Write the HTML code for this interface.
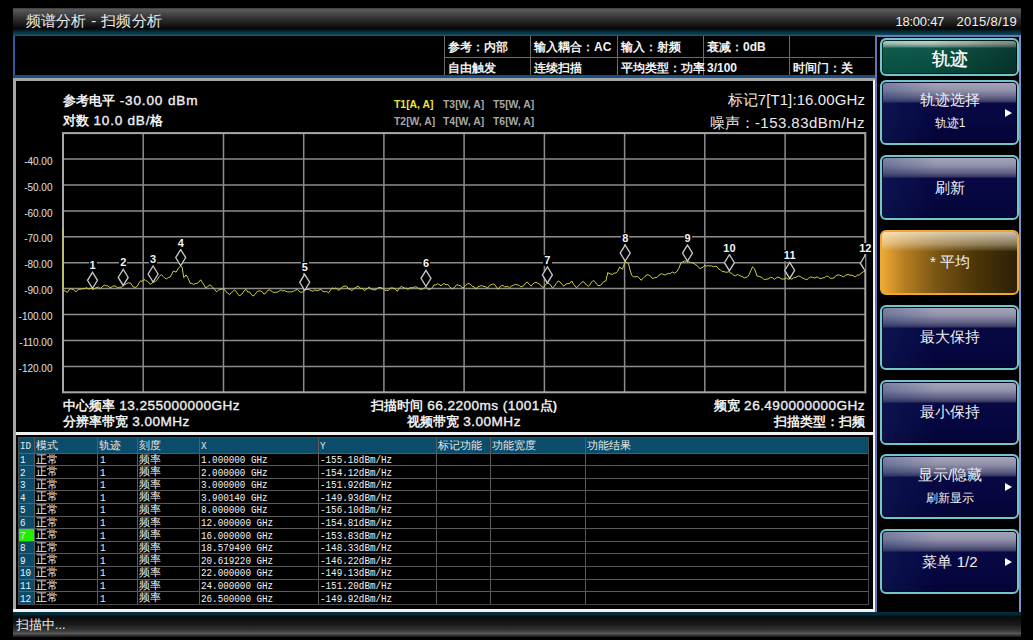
<!DOCTYPE html>
<html><head><meta charset="utf-8">
<style>
*{margin:0;padding:0;box-sizing:border-box}
html,body{width:1033px;height:640px;background:#000;overflow:hidden;font-family:"Liberation Sans",sans-serif;color:#fff}
.a{position:absolute;white-space:nowrap;line-height:1}
#title{left:13px;top:8px;width:1008px;height:21px;background:linear-gradient(#3a3a3a,#5a5a5a 8%,#2c2c2c 55%,#0a0a0a 95%,#050505)}
#teal{left:13px;top:29px;width:1008px;height:7px;background:linear-gradient(#020a0e,#03303c 40%,#0a3e4e 70%,#1f5070 88%,#2a3a70)}
.tt{font-size:15px;color:#e8e8e8;top:13px}
.tm{font-size:13px;color:#f0f0f0;top:15px}
#hdr{left:13px;top:36px;width:863px;height:42px;border-left:2px solid #3a55a0}
#hdrbot{left:13px;top:75px;width:862px;height:3px;background:#1a4f80}
.hl{background:#6a6a6a}
.hc{font-size:12px;font-weight:bold;color:#f2f2f2}
#gp{left:13px;top:78px;width:863px;height:534px;border-left:3px solid #a6a6a6;border-top:3px solid #a6a6a6;border-right:3px solid #f4f4f4}
#sep{left:16px;top:432px;width:857px;height:3px;background:#f0f0f0}
#gpbot{left:13px;top:609px;width:863px;height:3px;background:#f0f0f0}
.yl{font-size:10px;color:#e0e0e0;right:980.5px}
.gt{font-size:13px;font-weight:bold;color:#f0f0f0}
.l{letter-spacing:0.45px;font-weight:normal;font-size:13.6px;-webkit-text-stroke:0.35px #f0f0f0}
.ml{font-size:11px;font-weight:bold;color:#f4f4f4;background:#000;padding:0 1px;transform:translateX(-50%)}
.tr{font-size:10.4px;font-weight:bold;color:#a8a8a8}
#rp{left:875px;top:35px;width:146px;height:577px;border-left:2px solid #6575b5;border-top:2px solid #6a78b8;border-right:2px solid #8090c8}
.btn{position:absolute;left:880px;width:138.5px;height:65px;border:2px solid #72c6cc;border-radius:6px;overflow:hidden;box-shadow:inset 0 0 0 1px #020220;
 background:linear-gradient(#a8a8bc 0%,#9090aa 14%,#606084 26%,#3a3a64 32%,#080844 35%,#060640 70%,#040436 100%)}
.btn::before{content:"";position:absolute;inset:0;background:linear-gradient(90deg,rgba(20,50,110,.3),rgba(0,0,0,0) 40%)}
.btn.ttl{box-shadow:inset 0 0 0 1px #022018;background:linear-gradient(#c4d8d0 0%,#b0c8c0 10%,#6a9088 19%,#10584a 24%,#0a5244 60%,#084a3e 100%)}
.btn.ttl::before{background:linear-gradient(90deg,rgba(20,110,90,.12),rgba(0,0,0,0) 35%,rgba(0,0,0,.35))}
.btn.org{border-color:#f0a830;box-shadow:none;background:linear-gradient(90deg,#eeaa34 0%,#b87e22 16%,#7a5614 40%,#4a3408 70%,#2e2006 100%)}
.btn.org::before{background:linear-gradient(rgba(255,245,225,.75) 0%,rgba(240,225,195,.45) 20%,rgba(200,170,110,.15) 30%,rgba(0,0,0,0) 32%)}
.bt{position:absolute;left:1.5px;right:0;text-align:center;color:#eeeeee;line-height:1;z-index:2}
.arr{position:absolute;right:5px;width:0;height:0;border-left:7px solid #fff;border-top:4px solid transparent;border-bottom:4px solid transparent;z-index:2}
#status{left:13px;top:612px;width:1008px;height:25px;background:linear-gradient(#04303c 0%,#03283a 10%,#021018 17%,#0a0a0a 22%,#1a1a1a 50%,#3a3a3a 76%,#5a5a5a 86%,#3a3a3a 92%,#151515 100%)}
.tl{background:#5a5a5a}
.th{font-size:11px;color:#e8e8e8}
.td{font-size:11px;color:#f2f2f2}
.mono{font-family:"Liberation Mono",monospace;font-size:9.25px;transform:scaleY(1.25);transform-origin:0 0}
</style></head><body>
<!-- title bar -->
<div class="a" id="title"></div>
<div class="a" id="teal"></div>
<div class="a tt" style="left:25.5px;letter-spacing:0.3px">频谱分析 - 扫频分析</div>
<div class="a tm" style="left:895.5px;letter-spacing:-0.25px">18:00:47</div>
<div class="a tm" style="left:956.5px;letter-spacing:0.3px">2015/8/19</div>

<!-- header info -->
<div class="a" id="hdr"></div>
<div class="a" style="left:13px;top:35px;width:863px;height:1px;background:#2a4a80"></div>
<div class="a" id="hdrbot"></div>
<div class="a hl" style="left:444px;top:36px;width:1px;height:39px"></div>
<div class="a hl" style="left:530px;top:36px;width:1px;height:39px"></div>
<div class="a hl" style="left:617px;top:36px;width:1px;height:39px"></div>
<div class="a hl" style="left:703px;top:36px;width:1px;height:39px"></div>
<div class="a hl" style="left:789px;top:36px;width:1px;height:39px"></div>
<div class="a hl" style="left:444px;top:57px;width:430px;height:1px"></div>
<div class="a hc" style="left:448px;top:41px">参考：内部</div>
<div class="a hc" style="left:534px;top:41px">输入耦合：AC</div>
<div class="a hc" style="left:621px;top:41px">输入：射频</div>
<div class="a hc" style="left:707px;top:41px">衰减：0dB</div>
<div class="a hc" style="left:448px;top:62px">自由触发</div>
<div class="a hc" style="left:534px;top:62px">连续扫描</div>
<div class="a hc" style="left:621px;top:62px">平均类型：功率</div>
<div class="a hc" style="left:707px;top:62px">3/100</div>
<div class="a hc" style="left:793px;top:62px">时间门：关</div>

<!-- graph panel -->
<div class="a" id="gp"></div>
<div class="a" id="sep"></div>
<div class="a" id="gpbot"></div>

<div class="a gt" style="left:63px;top:94px">参考电平<span class="l" style="letter-spacing:0.85px"> -30.00 dBm</span></div>
<div class="a gt" style="left:63px;top:114px">对数<span class="l" style="letter-spacing:0.75px"> 10.0 dB/</span>格</div>

<div class="a tr" style="left:394px;top:100px;color:#e8e838">T1[A, A]</div>
<div class="a tr" style="left:443px;top:100px">T3[W, A]</div>
<div class="a tr" style="left:493px;top:100px">T5[W, A]</div>
<div class="a tr" style="left:394px;top:117px">T2[W, A]</div>
<div class="a tr" style="left:443px;top:117px">T4[W, A]</div>
<div class="a tr" style="left:493px;top:117px">T6[W, A]</div>

<div class="a" style="right:168px;top:92px;font-size:15px;color:#eaeaea">标记<span style="letter-spacing:0.1px">7[T1]:16.00GHz</span></div>
<div class="a" style="right:168px;top:115px;font-size:15px;color:#eaeaea">噪声：<span style="letter-spacing:0.45px">-153.83dBm/Hz</span></div>

<div class="a yl" style="top:156.6px">-40.00</div>
<div class="a yl" style="top:182.5px">-50.00</div>
<div class="a yl" style="top:208.5px">-60.00</div>
<div class="a yl" style="top:234.4px">-70.00</div>
<div class="a yl" style="top:260.3px">-80.00</div>
<div class="a yl" style="top:286.2px">-90.00</div>
<div class="a yl" style="top:312.1px">-100.00</div>
<div class="a yl" style="top:338.1px">-110.00</div>
<div class="a yl" style="top:364.0px">-120.00</div>
<svg class="a" style="left:0;top:0" width="1033" height="640" shape-rendering="auto">
<g stroke="#8c8c8c" stroke-width="1.5" fill="none">
<line x1="143.2" y1="133.1" x2="143.2" y2="392.3"/>
<line x1="223.5" y1="133.1" x2="223.5" y2="392.3"/>
<line x1="303.7" y1="133.1" x2="303.7" y2="392.3"/>
<line x1="383.9" y1="133.1" x2="383.9" y2="392.3"/>
<line x1="464.1" y1="133.1" x2="464.1" y2="392.3"/>
<line x1="544.4" y1="133.1" x2="544.4" y2="392.3"/>
<line x1="624.6" y1="133.1" x2="624.6" y2="392.3"/>
<line x1="704.8" y1="133.1" x2="704.8" y2="392.3"/>
<line x1="785.1" y1="133.1" x2="785.1" y2="392.3"/>
<line x1="63.0" y1="159.0" x2="865.3" y2="159.0"/>
<line x1="63.0" y1="184.9" x2="865.3" y2="184.9"/>
<line x1="63.0" y1="210.9" x2="865.3" y2="210.9"/>
<line x1="63.0" y1="236.8" x2="865.3" y2="236.8"/>
<line x1="63.0" y1="262.7" x2="865.3" y2="262.7"/>
<line x1="63.0" y1="288.6" x2="865.3" y2="288.6"/>
<line x1="63.0" y1="314.5" x2="865.3" y2="314.5"/>
<line x1="63.0" y1="340.5" x2="865.3" y2="340.5"/>
<line x1="63.0" y1="366.4" x2="865.3" y2="366.4"/>
</g>
<rect x="63.0" y="133.1" width="802.3" height="259.2" stroke="#a8a8a8" stroke-width="2" fill="none"/>
<polyline points="63,228 63,290.3 65.2,291.0 67.4,292.4 69.1,289.8 70.7,288.7 73.2,289.5 74.8,290.9 76.5,291.6 78.2,289.4 79.8,289.1 81.4,289.0 83.1,288.5 84.7,288.7 86.3,287.7 88.0,288.7 89.6,289.0 91.3,288.2 92.9,289.5 95.0,288.3 97.0,287.4 98.7,287.1 100.3,288.7 102.8,286.2 104.4,285.2 106.1,285.8 107.7,285.8 109.3,287.3 111.0,287.4 112.7,286.2 114.3,286.0 116.0,286.2 117.6,287.9 119.5,287.3 121.5,287.2 123.4,285.4 125.0,284.7 126.7,283.5 128.3,282.9 130.8,283.3 133.3,287.0 135.7,287.4 137.3,286.2 139.0,282.9 140.6,280.8 142.2,281.4 143.8,279.5 145.5,280.3 147.1,281.2 148.8,282.4 150.4,284.5 152.1,282.8 153.7,282.0 155.3,281.6 157.0,279.8 159.2,276.5 161.3,274.6 163.0,276.2 164.6,277.8 166.3,279.0 168.2,277.7 170.1,277.0 171.8,274.1 173.4,271.0 176.1,272.1 178.8,267.7 180.5,266.1 182.1,267.2 183.8,277.6 186.0,274.9 188.2,278.3 190.3,283.6 191.9,283.2 193.6,284.7 195.2,283.5 196.9,283.6 198.8,282.1 200.7,279.8 202.3,282.4 204.0,284.9 205.6,288.0 207.8,286.5 210.0,284.7 212.8,287.4 214.7,289.5 216.6,291.8 218.8,290.0 221.0,289.1 223.9,288.9 225.8,291.5 227.8,293.2 229.7,294.7 231.3,292.5 232.9,291.6 234.5,289.8 236.3,291.8 238.0,294.6 239.8,295.7 241.9,294.1 244.0,291.0 246.1,289.4 247.8,292.1 249.5,291.9 251.2,294.2 252.9,296.1 255.1,294.3 257.3,291.3 260.2,290.8 262.1,291.7 264.0,294.2 266.0,292.7 267.9,290.3 269.9,289.8 272.3,291.8 274.2,292.4 276.1,292.3 277.7,292.0 279.4,290.8 281.0,289.8 282.6,291.1 284.2,290.4 285.8,291.3 287.7,291.9 289.7,291.8 291.6,291.8 293.5,291.2 295.5,290.1 297.4,289.4 299.0,291.1 300.7,292.3 302.3,292.3 304.7,289.8 306.9,289.5 309.1,289.4 311.0,290.7 312.9,291.3 314.9,289.9 316.9,290.8 318.8,290.2 320.8,289.4 322.8,291.3 324.7,291.8 326.7,291.5 328.6,292.8 330.5,290.1 332.4,287.9 334.1,288.9 335.8,288.0 337.5,289.6 339.2,290.3 341.1,288.1 343.1,286.6 345.0,286.0 346.7,286.2 348.4,289.0 350.1,288.8 351.8,290.8 353.9,288.6 356.0,287.4 358.1,286.0 360.2,288.4 362.3,288.3 364.4,290.8 366.0,289.4 367.6,288.4 369.2,287.0 370.8,288.8 372.4,289.6 374.0,289.8 376.0,289.8 377.9,287.7 379.9,287.4 381.6,287.9 383.2,288.5 384.9,290.4 386.6,290.3 388.5,290.5 390.5,287.9 392.4,287.9 394.0,288.3 395.7,289.6 397.3,291.3 399.2,288.3 401.2,286.5 402.9,287.2 404.6,288.1 406.3,288.2 408.0,289.4 409.9,287.7 411.9,287.9 413.9,287.2 415.8,286.8 417.5,287.5 419.2,289.0 420.9,289.0 422.6,289.2 424.3,287.8 426.0,286.3 428.4,289.7 430.4,289.0 432.3,287.8 434.2,284.8 435.8,285.1 437.4,283.6 439.0,284.4 441.0,285.8 443.9,283.4 445.9,284.8 447.8,284.4 449.4,286.4 451.0,288.1 452.6,288.7 454.6,287.4 456.5,284.8 458.4,285.1 460.3,285.8 463.2,288.2 465.1,285.8 467.1,283.9 469.1,283.5 471.0,284.8 472.6,286.6 474.2,286.8 475.8,289.2 477.4,287.1 479.1,286.3 480.7,285.8 482.4,285.7 484.0,286.6 485.7,286.6 487.4,288.2 489.4,285.7 491.3,284.6 493.3,283.9 494.9,284.8 496.5,287.1 498.1,289.2 500.5,286.2 502.9,285.3 504.5,286.7 506.1,286.8 507.8,286.4 509.4,287.8 511.5,286.1 513.5,285.2 515.6,284.4 517.2,284.9 518.9,285.2 520.5,286.8 522.2,286.4 523.9,285.5 525.6,283.1 527.3,282.0 529.2,284.1 531.1,286.3 532.7,284.1 534.4,282.8 536.0,282.4 537.9,283.3 539.9,284.3 541.8,286.8 543.7,287.3 545.7,284.4 547.6,282.9 550.0,284.3 552.4,287.8 554.3,286.5 556.3,283.3 558.2,281.0 560.1,282.0 562.1,284.6 564.0,286.3 566.0,283.9 567.9,283.7 569.8,283.4 571.8,281.0 573.4,284.1 575.0,286.0 576.6,287.8 578.3,285.7 580.0,284.4 581.7,282.3 583.4,281.5 585.0,283.7 586.7,284.8 588.3,286.3 589.9,285.0 591.5,282.1 593.1,280.5 595.0,281.7 597.0,284.7 598.9,285.8 601.1,284.9 603.3,281.9 606.0,280.8 607.7,272.6 610.9,274.2 612.5,274.4 614.2,273.1 615.9,273.0 617.5,271.5 619.7,267.1 622.4,269.3 625.2,261.7 628.4,263.3 630.0,270.0 631.7,275.3 633.4,276.7 635.0,277.0 637.2,276.4 639.1,277.7 641.0,280.3 643.0,278.5 645.0,276.3 647.0,274.8 648.8,275.0 650.7,276.3 652.5,278.6 654.7,277.6 656.9,277.5 659.1,275.1 661.3,273.7 663.1,274.3 664.9,275.0 666.7,274.2 668.5,273.4 670.4,273.7 672.2,272.0 674.4,273.1 676.6,272.0 678.8,268.4 681.0,262.7 682.8,261.9 684.6,261.0 686.4,261.1 688.6,261.3 690.8,262.7 693.0,262.9 695.2,264.4 697.5,265.9 699.8,268.7 701.4,267.8 703.1,267.3 704.7,265.3 706.4,266.2 708.1,265.5 709.8,266.0 711.5,265.8 713.4,266.7 715.3,266.3 716.9,266.5 718.6,268.9 720.2,269.7 722.1,271.6 724.0,271.6 725.6,272.2 727.3,272.2 728.9,271.6 730.5,272.9 732.1,273.5 733.7,275.5 735.7,275.6 737.6,274.5 740.5,276.0 742.5,276.6 744.4,277.9 746.0,277.4 747.6,276.7 749.2,274.5 750.9,270.4 752.6,266.8 754.5,268.7 757.0,276.0 759.4,276.5 761.8,277.4 763.8,279.4 765.7,279.4 768.1,278.9 770.5,277.4 772.5,277.7 774.4,279.4 776.0,277.9 777.6,277.3 779.2,277.4 781.1,278.8 783.1,279.1 785.0,278.9 786.6,278.0 788.3,279.3 789.9,278.4 791.8,279.2 793.7,277.8 796.0,277.2 798.4,275.9 800.3,276.5 802.2,277.8 804.5,278.9 806.9,279.7 808.8,278.1 810.6,277.0 812.5,277.3 814.9,278.1 817.2,276.9 819.0,278.1 820.9,278.7 822.8,277.8 824.6,277.8 826.5,275.9 828.4,276.6 830.3,278.3 832.2,278.3 834.1,277.9 835.9,275.5 837.8,275.0 839.7,275.1 841.5,275.8 843.4,276.9 845.8,275.1 848.1,274.5 850.0,275.3 851.9,275.2 853.7,276.1 855.6,276.9 857.5,274.8 859.3,275.3 861.2,273.1 863.2,271.8 865.3,271.2" stroke="#d0d040" stroke-width="1" fill="none" stroke-linejoin="round"/>
<clipPath id="gc"><rect x="0" y="0" width="865.3" height="640"/></clipPath><g clip-path="url(#gc)">
<path d="M92.5,272.3 L97.5,280.3 L92.5,288.3 L87.5,280.3 Z" stroke="#c8c8c8" stroke-width="1.3" fill="#000"/>
<path d="M123.2,269.4 L128.2,277.4 L123.2,285.4 L118.2,277.4 Z" stroke="#c8c8c8" stroke-width="1.3" fill="#000"/>
<path d="M153.1,266 L158.1,274 L153.1,282 L148.1,274 Z" stroke="#c8c8c8" stroke-width="1.3" fill="#000"/>
<path d="M180.7,249.60000000000002 L185.7,257.6 L180.7,265.6 L175.7,257.6 Z" stroke="#c8c8c8" stroke-width="1.3" fill="#000"/>
<path d="M304.7,274.3 L309.7,282.3 L304.7,290.3 L299.7,282.3 Z" stroke="#c8c8c8" stroke-width="1.3" fill="#000"/>
<path d="M426,270.3 L431,278.3 L426,286.3 L421,278.3 Z" stroke="#c8c8c8" stroke-width="1.3" fill="#000"/>
<path d="M547.4,266.9 L552.4,274.9 L547.4,282.9 L542.4,274.9 Z" stroke="#c8c8c8" stroke-width="1.3" fill="#000"/>
<path d="M625.2,245.10000000000002 L630.2,253.10000000000002 L625.2,261.1 L620.2,253.10000000000002 Z" stroke="#c8c8c8" stroke-width="1.3" fill="#000"/>
<path d="M687.5,245.10000000000002 L692.5,253.10000000000002 L687.5,261.1 L682.5,253.10000000000002 Z" stroke="#c8c8c8" stroke-width="1.3" fill="#000"/>
<path d="M729.4,254.7 L734.4,262.7 L729.4,270.7 L724.4,262.7 Z" stroke="#c8c8c8" stroke-width="1.3" fill="#000"/>
<path d="M789.7,262.4 L794.7,270.4 L789.7,278.4 L784.7,270.4 Z" stroke="#c8c8c8" stroke-width="1.3" fill="#000"/>
<path d="M865.3,255.2 L870.3,263.2 L865.3,271.2 L860.3,263.2 Z" stroke="#c8c8c8" stroke-width="1.3" fill="#000"/>
</g></svg>
<div class="a ml" style="left:92.5px;top:260.3px">1</div>
<div class="a ml" style="left:123.2px;top:257.4px">2</div>
<div class="a ml" style="left:153.1px;top:254.0px">3</div>
<div class="a ml" style="left:180.7px;top:237.6px">4</div>
<div class="a ml" style="left:304.7px;top:262.3px">5</div>
<div class="a ml" style="left:426.0px;top:258.3px">6</div>
<div class="a ml" style="left:547.4px;top:254.9px">7</div>
<div class="a ml" style="left:625.2px;top:233.1px">8</div>
<div class="a ml" style="left:687.5px;top:233.1px">9</div>
<div class="a ml" style="left:729.4px;top:242.7px">10</div>
<div class="a ml" style="left:789.7px;top:250.4px">11</div>
<div class="a ml" style="left:865.3px;top:243.2px">12</div>

<div class="a gt" style="left:63px;top:399px">中心频率<span class="l"> 13.255000000GHz</span></div>
<div class="a gt" style="left:63px;top:415px">分辨率带宽<span class="l"> 3.00MHz</span></div>
<div class="a gt" style="left:364px;top:399px;width:200px;text-align:center">扫描时间<span class="l"> 66.2200ms (1001</span>点)</div>
<div class="a gt" style="left:364px;top:415px;width:200px;text-align:center">视频带宽<span class="l"> 3.00MHz</span></div>
<div class="a gt" style="right:168px;top:399px">频宽<span class="l"> 26.490000000GHz</span></div>
<div class="a gt" style="right:168px;top:415px">扫描类型：扫频</div>

<div class="a" style="left:18px;top:436.5px;width:851px;height:168.5px;border:1px solid #4a4a4a"></div>
<div class="a" style="left:19px;top:437.5px;width:849px;height:15.5px;background:#0b4c6a"></div>
<div class="a" style="left:19px;top:453.0px;width:15px;height:151.0px;background:#0b4c6a"></div>
<div class="a" style="left:19px;top:529.2px;width:15px;height:12.0px;background:#22ee00"></div>
<div class="a tl" style="left:34px;top:437.5px;width:1px;height:166.5px"></div>
<div class="a tl" style="left:97px;top:437.5px;width:1px;height:166.5px"></div>
<div class="a tl" style="left:137px;top:437.5px;width:1px;height:166.5px"></div>
<div class="a tl" style="left:199px;top:437.5px;width:1px;height:166.5px"></div>
<div class="a tl" style="left:318px;top:437.5px;width:1px;height:166.5px"></div>
<div class="a tl" style="left:436px;top:437.5px;width:1px;height:166.5px"></div>
<div class="a tl" style="left:490px;top:437.5px;width:1px;height:166.5px"></div>
<div class="a tl" style="left:585px;top:437.5px;width:1px;height:166.5px"></div>
<div class="a tl" style="left:19px;top:452.5px;width:849px;height:1px"></div>
<div class="a" style="left:19px;top:452.5px;width:15px;height:1px;background:#3a6c86"></div>
<div class="a tl" style="left:19px;top:465.1px;width:849px;height:1px"></div>
<div class="a" style="left:19px;top:465.1px;width:15px;height:1px;background:#3a6c86"></div>
<div class="a tl" style="left:19px;top:477.7px;width:849px;height:1px"></div>
<div class="a" style="left:19px;top:477.7px;width:15px;height:1px;background:#3a6c86"></div>
<div class="a tl" style="left:19px;top:490.3px;width:849px;height:1px"></div>
<div class="a" style="left:19px;top:490.3px;width:15px;height:1px;background:#3a6c86"></div>
<div class="a tl" style="left:19px;top:502.9px;width:849px;height:1px"></div>
<div class="a" style="left:19px;top:502.9px;width:15px;height:1px;background:#3a6c86"></div>
<div class="a tl" style="left:19px;top:515.5px;width:849px;height:1px"></div>
<div class="a" style="left:19px;top:515.5px;width:15px;height:1px;background:#3a6c86"></div>
<div class="a tl" style="left:19px;top:528.1px;width:849px;height:1px"></div>
<div class="a" style="left:19px;top:528.1px;width:15px;height:1px;background:#3a6c86"></div>
<div class="a tl" style="left:19px;top:540.7px;width:849px;height:1px"></div>
<div class="a" style="left:19px;top:540.7px;width:15px;height:1px;background:#3a6c86"></div>
<div class="a tl" style="left:19px;top:553.3px;width:849px;height:1px"></div>
<div class="a" style="left:19px;top:553.3px;width:15px;height:1px;background:#3a6c86"></div>
<div class="a tl" style="left:19px;top:565.9px;width:849px;height:1px"></div>
<div class="a" style="left:19px;top:565.9px;width:15px;height:1px;background:#3a6c86"></div>
<div class="a tl" style="left:19px;top:578.5px;width:849px;height:1px"></div>
<div class="a" style="left:19px;top:578.5px;width:15px;height:1px;background:#3a6c86"></div>
<div class="a tl" style="left:19px;top:591.1px;width:849px;height:1px"></div>
<div class="a" style="left:19px;top:591.1px;width:15px;height:1px;background:#3a6c86"></div>
<div class="a th mono" style="left:20px;top:439.5px">ID</div>
<div class="a th" style="left:36px;top:439.5px">模式</div>
<div class="a th" style="left:99px;top:439.5px">轨迹</div>
<div class="a th" style="left:139px;top:439.5px">刻度</div>
<div class="a th mono" style="left:201px;top:439.5px">X</div>
<div class="a th mono" style="left:320px;top:439.5px">Y</div>
<div class="a th" style="left:438px;top:439.5px">标记功能</div>
<div class="a th" style="left:492px;top:439.5px">功能宽度</div>
<div class="a th" style="left:587px;top:439.5px">功能结果</div>
<div class="a td mono" style="left:20px;top:454.0px">1</div>
<div class="a td" style="left:36px;top:453.5px">正常</div>
<div class="a td mono" style="left:100px;top:454.0px">1</div>
<div class="a td" style="left:139px;top:453.5px">频率</div>
<div class="a td mono" style="left:201px;top:454.0px">1.000000 GHz</div>
<div class="a td mono" style="left:320px;top:454.0px">-155.18dBm/Hz</div>
<div class="a td mono" style="left:20px;top:466.6px">2</div>
<div class="a td" style="left:36px;top:466.1px">正常</div>
<div class="a td mono" style="left:100px;top:466.6px">1</div>
<div class="a td" style="left:139px;top:466.1px">频率</div>
<div class="a td mono" style="left:201px;top:466.6px">2.000000 GHz</div>
<div class="a td mono" style="left:320px;top:466.6px">-154.12dBm/Hz</div>
<div class="a td mono" style="left:20px;top:479.2px">3</div>
<div class="a td" style="left:36px;top:478.7px">正常</div>
<div class="a td mono" style="left:100px;top:479.2px">1</div>
<div class="a td" style="left:139px;top:478.7px">频率</div>
<div class="a td mono" style="left:201px;top:479.2px">3.000000 GHz</div>
<div class="a td mono" style="left:320px;top:479.2px">-151.92dBm/Hz</div>
<div class="a td mono" style="left:20px;top:491.8px">4</div>
<div class="a td" style="left:36px;top:491.3px">正常</div>
<div class="a td mono" style="left:100px;top:491.8px">1</div>
<div class="a td" style="left:139px;top:491.3px">频率</div>
<div class="a td mono" style="left:201px;top:491.8px">3.900140 GHz</div>
<div class="a td mono" style="left:320px;top:491.8px">-149.93dBm/Hz</div>
<div class="a td mono" style="left:20px;top:504.4px">5</div>
<div class="a td" style="left:36px;top:503.9px">正常</div>
<div class="a td mono" style="left:100px;top:504.4px">1</div>
<div class="a td" style="left:139px;top:503.9px">频率</div>
<div class="a td mono" style="left:201px;top:504.4px">8.000000 GHz</div>
<div class="a td mono" style="left:320px;top:504.4px">-156.10dBm/Hz</div>
<div class="a td mono" style="left:20px;top:517.0px">6</div>
<div class="a td" style="left:36px;top:516.5px">正常</div>
<div class="a td mono" style="left:100px;top:517.0px">1</div>
<div class="a td" style="left:139px;top:516.5px">频率</div>
<div class="a td mono" style="left:201px;top:517.0px">12.000000 GHz</div>
<div class="a td mono" style="left:320px;top:517.0px">-154.81dBm/Hz</div>
<div class="a td mono" style="left:20px;top:529.6px">7</div>
<div class="a td" style="left:36px;top:529.1px">正常</div>
<div class="a td mono" style="left:100px;top:529.6px">1</div>
<div class="a td" style="left:139px;top:529.1px">频率</div>
<div class="a td mono" style="left:201px;top:529.6px">16.000000 GHz</div>
<div class="a td mono" style="left:320px;top:529.6px">-153.83dBm/Hz</div>
<div class="a td mono" style="left:20px;top:542.2px">8</div>
<div class="a td" style="left:36px;top:541.7px">正常</div>
<div class="a td mono" style="left:100px;top:542.2px">1</div>
<div class="a td" style="left:139px;top:541.7px">频率</div>
<div class="a td mono" style="left:201px;top:542.2px">18.579490 GHz</div>
<div class="a td mono" style="left:320px;top:542.2px">-148.33dBm/Hz</div>
<div class="a td mono" style="left:20px;top:554.8px">9</div>
<div class="a td" style="left:36px;top:554.3px">正常</div>
<div class="a td mono" style="left:100px;top:554.8px">1</div>
<div class="a td" style="left:139px;top:554.3px">频率</div>
<div class="a td mono" style="left:201px;top:554.8px">20.619220 GHz</div>
<div class="a td mono" style="left:320px;top:554.8px">-146.22dBm/Hz</div>
<div class="a td mono" style="left:20px;top:567.4px">10</div>
<div class="a td" style="left:36px;top:566.9px">正常</div>
<div class="a td mono" style="left:100px;top:567.4px">1</div>
<div class="a td" style="left:139px;top:566.9px">频率</div>
<div class="a td mono" style="left:201px;top:567.4px">22.000000 GHz</div>
<div class="a td mono" style="left:320px;top:567.4px">-149.13dBm/Hz</div>
<div class="a td mono" style="left:20px;top:580.0px">11</div>
<div class="a td" style="left:36px;top:579.5px">正常</div>
<div class="a td mono" style="left:100px;top:580.0px">1</div>
<div class="a td" style="left:139px;top:579.5px">频率</div>
<div class="a td mono" style="left:201px;top:580.0px">24.000000 GHz</div>
<div class="a td mono" style="left:320px;top:580.0px">-151.20dBm/Hz</div>
<div class="a td mono" style="left:20px;top:592.6px">12</div>
<div class="a td" style="left:36px;top:592.1px">正常</div>
<div class="a td mono" style="left:100px;top:592.6px">1</div>
<div class="a td" style="left:139px;top:592.1px">频率</div>
<div class="a td mono" style="left:201px;top:592.6px">26.500000 GHz</div>
<div class="a td mono" style="left:320px;top:592.6px">-149.92dBm/Hz</div>

<!-- right panel -->
<div class="a" id="rp"></div>
<div class="btn ttl" style="top:38px;height:38px"><div class="bt" style="top:9.5px;font-size:18px;-webkit-text-stroke:0.3px #fff;color:#fff">轨迹</div></div>
<div class="btn" style="top:80px"><div class="bt" style="top:10px;font-size:15px">轨迹选择</div><div class="bt" style="top:34.5px;font-size:12px">轨迹1</div><div class="arr" style="top:27px"></div></div>
<div class="btn" style="top:155px"><div class="bt" style="top:22.8px;font-size:15px">刷新</div></div>
<div class="btn org" style="top:229.5px"><div class="bt" style="top:22.8px;font-size:15px">* 平均</div></div>
<div class="btn" style="top:304.5px"><div class="bt" style="top:22.8px;font-size:15px">最大保持</div></div>
<div class="btn" style="top:379.5px"><div class="bt" style="top:22.8px;font-size:15px">最小保持</div></div>
<div class="btn" style="top:454px"><div class="bt" style="top:11px;font-size:15px">显示/隐藏</div><div class="bt" style="top:36px;font-size:12px">刷新显示</div><div class="arr" style="top:27px"></div></div>
<div class="btn" style="top:529px"><div class="bt" style="top:22.8px;font-size:15px">菜单 1/2</div><div class="arr" style="top:27px"></div></div>

<!-- status -->
<div class="a" id="status"></div>
<div class="a" style="left:16px;top:618.5px;font-size:12.5px;color:#eeeeee">扫描中...</div>
</body></html>
